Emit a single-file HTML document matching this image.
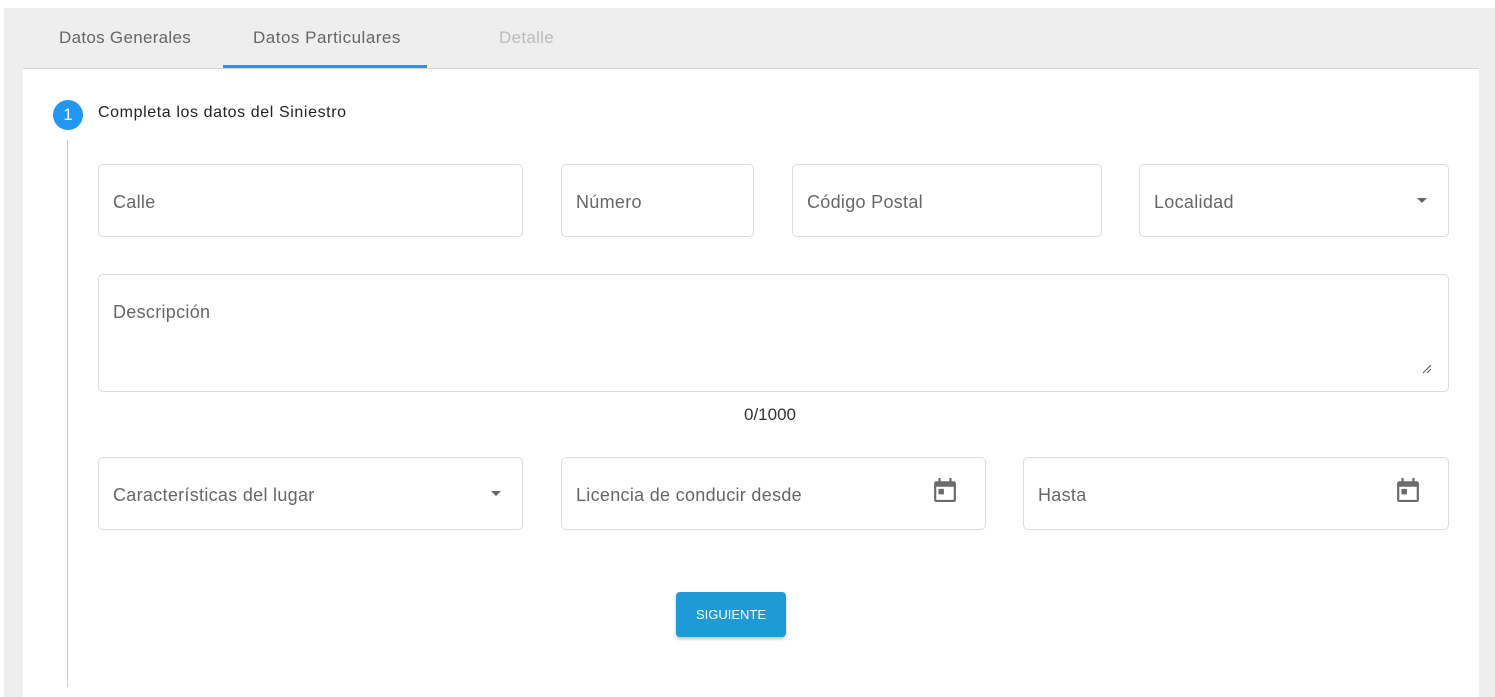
<!DOCTYPE html>
<html><head><style>
*{box-sizing:border-box;margin:0;padding:0}
body{width:1495px;height:697px;background:#fff;position:relative;overflow:hidden;font-family:"Liberation Sans",sans-serif}
.abs{position:absolute}
.panel{left:4px;top:8px;width:1491px;height:689px;background:#eeeeee}
.card{left:23px;top:68px;width:1456px;height:629px;background:#fff;border-top:1px solid #d8d8d8}
.tab{top:28px;font-size:17px;color:#666;letter-spacing:0.3px}
.f{border:1px solid #dcdcdc;border-radius:5px;background:#fff}
.lbl{position:absolute;left:14px;font-size:18px;color:#666;letter-spacing:0.3px}
.cal{position:absolute;width:22px;height:24px}
.arr{position:absolute;width:0;height:0;border-left:5px solid transparent;border-right:5px solid transparent;border-top:5px solid #666}
</style></head><body>
<div class="abs panel"></div>
<div class="abs tab" style="left:59px">Datos Generales</div>
<div class="abs tab" style="left:253px;letter-spacing:0.5px">Datos Particulares</div>
<div class="abs tab" style="left:499px;color:#bbb">Detalle</div>
<div class="abs" style="left:223px;top:65px;width:204px;height:3px;background:#2196f3"></div>
<div class="abs card"></div>
<div class="abs" style="left:53px;top:100px;width:30px;height:30px;border-radius:50%;background:#2196f3;color:#fff;font-size:17px;text-align:center;line-height:30px">1</div>
<div class="abs" style="left:98px;top:104px;font-size:16px;color:#222;letter-spacing:0.6px">Completa los datos del Siniestro</div>
<div class="abs" style="left:67px;top:140px;width:1px;height:547px;background:#ccc"></div>

<div class="abs f" style="left:98px;top:164px;width:425px;height:73px"><span class="lbl" style="top:27px">Calle</span></div>
<div class="abs f" style="left:561px;top:164px;width:193px;height:73px"><span class="lbl" style="top:27px">Número</span></div>
<div class="abs f" style="left:792px;top:164px;width:310px;height:73px"><span class="lbl" style="top:27px">Código Postal</span></div>
<div class="abs f" style="left:1139px;top:164px;width:310px;height:73px"><span class="lbl" style="top:27px">Localidad</span><div class="arr" style="left:277px;top:33px"></div></div>

<div class="abs f" style="left:98px;top:274px;width:1351px;height:118px"><span class="lbl" style="top:27px">Descripción</span>
<svg class="abs" style="left:1323px;top:89px" width="10" height="10"><path d="M1 9L9 1M5 9L9 5" stroke="#555" stroke-width="1"/></svg></div>
<div class="abs" style="left:744px;top:405px;font-size:17px;color:#333">0/1000</div>

<div class="abs f" style="left:98px;top:457px;width:425px;height:73px"><span class="lbl" style="top:27px">Características del lugar</span><div class="arr" style="left:392px;top:33px"></div></div>
<div class="abs f" style="left:561px;top:457px;width:425px;height:73px"><span class="lbl" style="top:27px">Licencia de conducir desde</span>
<svg class="cal" style="left:372px;top:20px" viewBox="0 0 20 22"><path d="M4 0h2v3h8V0h2v3h2a2 2 0 0 1 2 2v15a2 2 0 0 1-2 2H2a2 2 0 0 1-2-2V5a2 2 0 0 1 2-2h2zM2 8v12h16V8z M4 10h5v5H4z" fill="#6b6b6b"/></svg></div>
<div class="abs f" style="left:1023px;top:457px;width:426px;height:73px"><span class="lbl" style="top:27px">Hasta</span>
<svg class="cal" style="left:373px;top:20px" viewBox="0 0 20 22"><path d="M4 0h2v3h8V0h2v3h2a2 2 0 0 1 2 2v15a2 2 0 0 1-2 2H2a2 2 0 0 1-2-2V5a2 2 0 0 1 2-2h2zM2 8v12h16V8z M4 10h5v5H4z" fill="#6b6b6b"/></svg></div>

<div class="abs" style="left:676px;top:592px;width:110px;height:45px;background:#1e9ad6;border-radius:4px;box-shadow:0 2px 3px rgba(0,0,0,.25);color:#fff;font-size:13px;text-align:center;line-height:45px">SIGUIENTE</div>
</body></html>
